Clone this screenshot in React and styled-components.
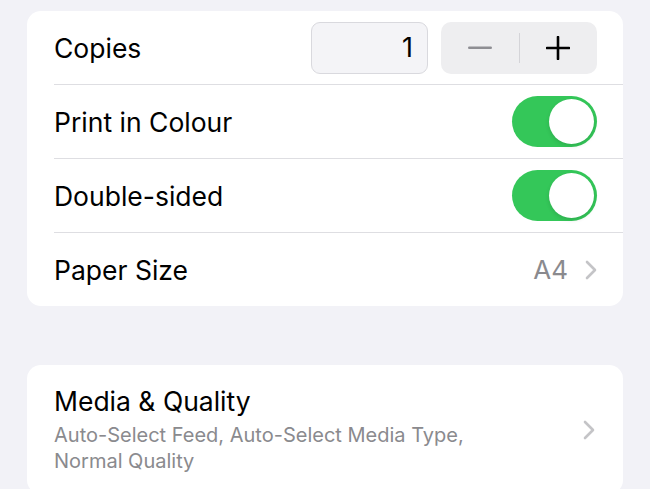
import React from "react";
import styled, { createGlobalStyle } from "styled-components";

const GlobalStyle = createGlobalStyle`
  html, body {
    margin: 0;
    padding: 0;
    background: #f2f2f7;
    font-family: Inter, "Noto Sans", sans-serif;
    -webkit-font-smoothing: antialiased;
  }
`;

const Page = styled.div`
  width: 650px;
  height: 489px;
  overflow: hidden;
  background: #f2f2f7;
  padding: 11px 27px 0;
  box-sizing: border-box;
  display: flex;
  flex-direction: column;
  gap: 59px;
`;

const Card = styled.div`
  background: #ffffff;
  border-radius: 14px;
  display: flex;
  flex-direction: column;
`;

const Row = styled.div`
  height: ${(p) => p.$h || 73}px;
  display: flex;
  align-items: center;
  justify-content: space-between;
  margin-left: 27px;
  padding-right: 26px;
  border-top: ${(p) => (p.$first ? "none" : "1px solid #dedee2")};
  box-sizing: border-box;
`;

const Label = styled.span`
  font-size: 26.5px;
  color: #000;
`;

const Stepper = styled.div`
  display: flex;
  gap: 13px;
  align-items: center;
`;

const CountField = styled.div`
  width: 117px;
  height: 52px;
  box-sizing: border-box;
  border: 1px solid #d9d9de;
  border-radius: 9px;
  background: #f4f4f7;
  display: flex;
  align-items: center;
  justify-content: flex-end;
  padding-right: 14px;
  font-size: 27px;
  color: #000;
`;

const StepButtons = styled.div`
  width: 156px;
  height: 52px;
  border-radius: 10px;
  background: #eeeef0;
  display: flex;
  align-items: center;
`;

const StepButton = styled.div`
  flex: 1;
  display: flex;
  align-items: center;
  justify-content: center;
`;

const StepDivider = styled.div`
  width: 1px;
  height: 30px;
  background: #d4d4d8;
`;

const Toggle = styled.div`
  width: 85px;
  height: 51px;
  border-radius: 26px;
  background: #34c759;
  display: flex;
  align-items: center;
  justify-content: flex-end;
  padding: 0 3px;
  box-sizing: border-box;
`;

const Knob = styled.div`
  width: 45px;
  height: 45px;
  border-radius: 50%;
  background: #fff;
  box-shadow: 0 2px 4px rgba(0, 0, 0, 0.12);
`;

const Detail = styled.div`
  display: flex;
  align-items: center;
  gap: 17px;
  color: #8a8a8e;
  font-size: 26px;
`;

const Chevron = () => (
  <svg width="12" height="20" viewBox="0 0 12 20">
    <path d="M2 2 L10 10 L2 18" fill="none" stroke="#c4c4c7" strokeWidth="2.6" strokeLinecap="round" strokeLinejoin="round" />
  </svg>
);

const MediaRow = styled.div`
  display: flex;
  align-items: center;
  justify-content: space-between;
  padding: 20px 28px 20px 27px;
`;

const MediaText = styled.div`
  display: flex;
  flex-direction: column;
  gap: 5px;
`;

const Sub = styled.div`
  font-size: 20px;
  line-height: 26px;
  color: #8a8a8e;
  width: 440px;
`;

export default function App() {
  return (
    <>
      <GlobalStyle />
      <Page>
        <Card>
          <Row $first $h={73}>
            <Label>Copies</Label>
            <Stepper>
              <CountField>1</CountField>
              <StepButtons>
                <StepButton>
                  <svg width="24" height="4" viewBox="0 0 24 4">
                    <rect x="0" y="0.5" width="24" height="2.6" rx="1.3" fill="#8e8e93" />
                  </svg>
                </StepButton>
                <StepDivider />
                <StepButton>
                  <svg width="24" height="24" viewBox="0 0 24 24">
                    <path d="M12 1 V23 M1 12 H23" stroke="#000" strokeWidth="2.6" strokeLinecap="round" />
                  </svg>
                </StepButton>
              </StepButtons>
            </Stepper>
          </Row>
          <Row $h={74}>
            <Label>Print in Colour</Label>
            <Toggle><Knob /></Toggle>
          </Row>
          <Row $h={74}>
            <Label>Double-sided</Label>
            <Toggle><Knob /></Toggle>
          </Row>
          <Row $h={74}>
            <Label>Paper Size</Label>
            <Detail>
              A4
              <Chevron />
            </Detail>
          </Row>
        </Card>
        <Card>
          <MediaRow>
            <MediaText>
              <Label>Media &amp; Quality</Label>
              <Sub>Auto-Select Feed, Auto-Select Media Type, Normal Quality</Sub>
            </MediaText>
            <Chevron />
          </MediaRow>
        </Card>
      </Page>
    </>
  );
}
